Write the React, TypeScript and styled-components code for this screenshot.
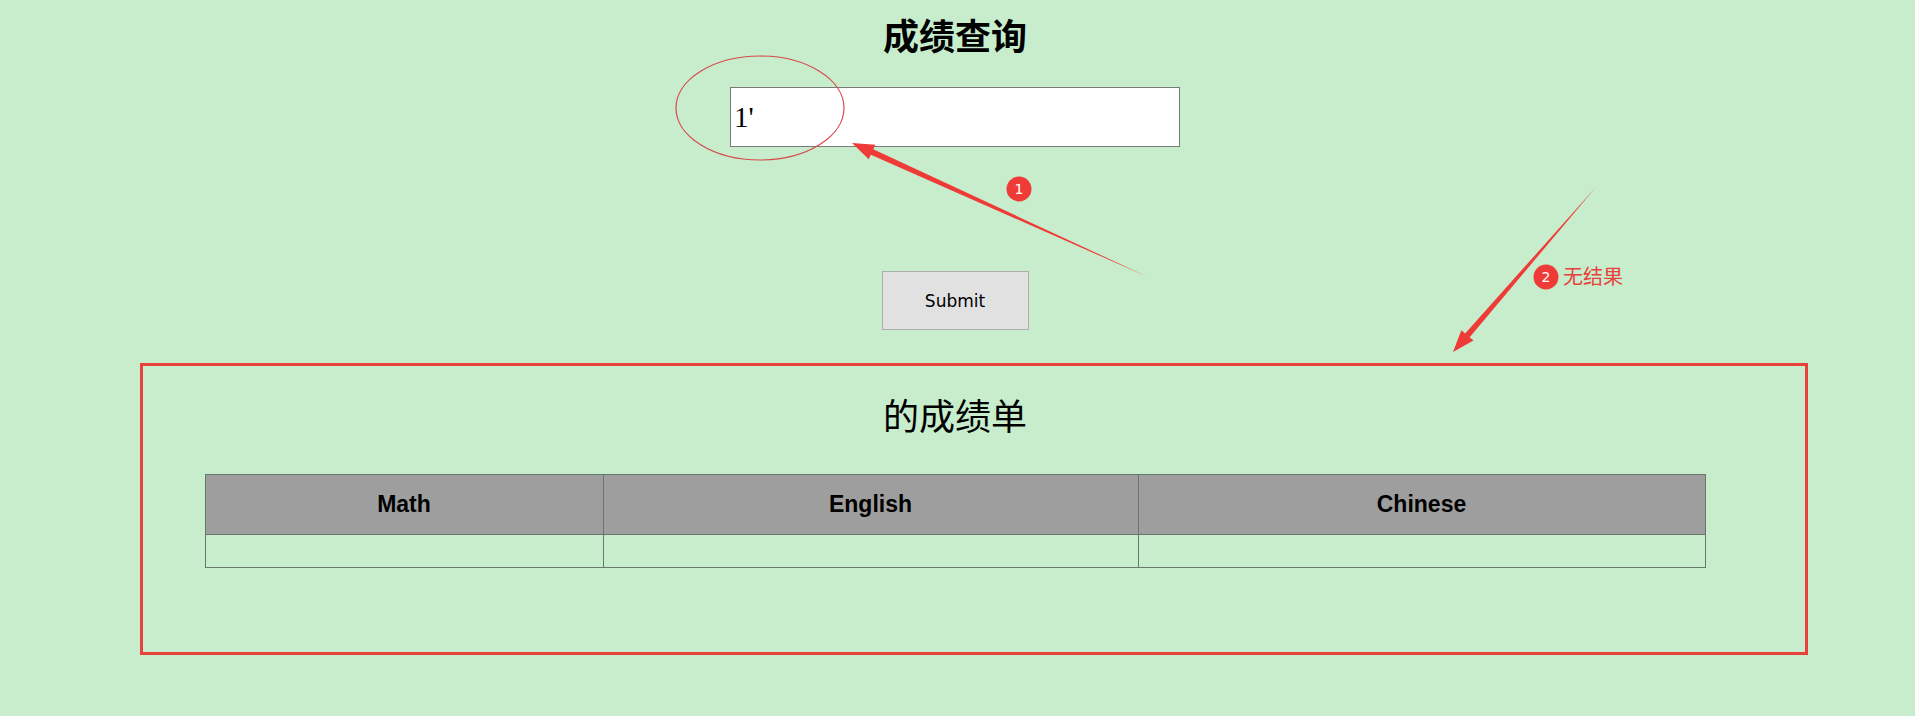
import styled, { createGlobalStyle } from "styled-components";

const GlobalStyle = createGlobalStyle`
  html, body {
    margin: 0;
    padding: 0;
    background-color: #c7edcc;
  }
`;

type Point = { x: number; y: number };

const arrowPoints = (tail: Point, tip: Point, shaft = 6, headLen = 22, headHalf = 8) => {
  const dx = tip.x - tail.x;
  const dy = tip.y - tail.y;
  const len = Math.hypot(dx, dy);
  const ux = dx / len;
  const uy = dy / len;
  const nx = -uy;
  const ny = ux;
  const bx = tip.x - ux * headLen;
  const by = tip.y - uy * headLen;
  const pts = [
    [tail.x, tail.y],
    [bx + (nx * shaft) / 2, by + (ny * shaft) / 2],
    [bx + nx * headHalf, by + ny * headHalf],
    [tip.x, tip.y],
    [bx - nx * headHalf, by - ny * headHalf],
    [bx - (nx * shaft) / 2, by - (ny * shaft) / 2],
  ];
  return pts.map((p) => p.join(",")).join(" ");
};

const Annotations = () => (
  <OverlayStyled viewBox="0 0 1915 716" width="1915" height="716">
    <ellipse cx="760" cy="108" rx="84" ry="52" fill="none" stroke="#d9474a" strokeWidth="1.2" />
    <polygon points={arrowPoints({ x: 1148, y: 277 }, { x: 852, y: 143 })} fill="#ef3b38" />
    <circle cx="1019" cy="189" r="12.5" fill="#ef3b38" />
    <text x="1019" y="194" textAnchor="middle" fontSize="14" fill="#fff" fontFamily="'DejaVu Sans', sans-serif">
      1
    </text>
    <polygon points={arrowPoints({ x: 1596, y: 187 }, { x: 1453, y: 352 })} fill="#ef3b38" />
    <circle cx="1546" cy="277" r="12.5" fill="#ef3b38" />
    <text x="1546" y="282" textAnchor="middle" fontSize="14" fill="#fff" fontFamily="'DejaVu Sans', sans-serif">
      2
    </text>
    <text x="1563" y="284" fontSize="20" fill="#e8403a" fontFamily="'Noto Sans CJK SC', sans-serif">
      无结果
    </text>
    <rect x="141.5" y="364.5" width="1665" height="289" fill="none" stroke="#e8403a" strokeWidth="3" />
  </OverlayStyled>
);

const subjects = [
  { name: "Math", width: 398 },
  { name: "English", width: 535 },
  { name: "Chinese", width: 567 },
];

const App = () => {
  return (
    <>
      <GlobalStyle />
      <PageStyled>
        <ContentStyled>
          <TitleStyled>成绩查询</TitleStyled>
          <QueryInputStyled type="text" defaultValue="1'" />
          <SubmitButtonStyled type="button">Submit</SubmitButtonStyled>
          <ResultTitleStyled>的成绩单</ResultTitleStyled>
          <ScoreTableStyled>
            <thead>
              <tr>
                {subjects.map((s) => (
                  <HeadCellStyled key={s.name} $width={s.width}>
                    {s.name}
                  </HeadCellStyled>
                ))}
              </tr>
            </thead>
            <tbody>
              <tr>
                {subjects.map((s) => (
                  <CellStyled key={s.name}></CellStyled>
                ))}
              </tr>
            </tbody>
          </ScoreTableStyled>
        </ContentStyled>
        <Annotations />
      </PageStyled>
    </>
  );
};

export default App;

const PageStyled = styled.div`
  position: relative;
  width: 100%;
  min-height: 716px;
  overflow: hidden;
  background-color: #c7edcc;
`;

const ContentStyled = styled.div`
  width: 1910px;
  display: flex;
  flex-direction: column;
  align-items: center;
`;

const TitleStyled = styled.h1`
  margin: 16px 0 0;
  font-family: "Noto Sans CJK SC", sans-serif;
  font-size: 36px;
  line-height: 36px;
  font-weight: 700;
  color: #000;
`;

const QueryInputStyled = styled.input`
  box-sizing: border-box;
  margin-top: 35px;
  width: 450px;
  height: 60px;
  padding: 0 3px;
  border: 1px solid #7a7a7a;
  background-color: #fff;
  font-family: "Liberation Serif", serif;
  font-size: 29px;
  color: #000;
  outline: none;
`;

const SubmitButtonStyled = styled.button`
  box-sizing: border-box;
  margin-top: 124px;
  width: 147px;
  height: 59px;
  background-color: #e1e1e1;
  border: 1px solid #adadad;
  font-family: "DejaVu Sans", sans-serif;
  font-size: 17px;
  color: #000;
  cursor: pointer;
`;

const ResultTitleStyled = styled.h2`
  margin: 66px 0 0;
  font-family: "Noto Sans CJK SC", sans-serif;
  font-size: 36px;
  line-height: 36px;
  font-weight: 400;
  color: #000;
`;

const ScoreTableStyled = styled.table`
  margin-top: 42px;
  width: 1500px;
  border-collapse: collapse;
  table-layout: fixed;
`;

const HeadCellStyled = styled.th<{ $width: number }>`
  width: ${({ $width }) => $width}px;
  height: 60px;
  padding: 0;
  box-sizing: border-box;
  background-color: #9e9e9e;
  border: 1px solid #66786a;
  font-family: "Liberation Sans", Arial, sans-serif;
  font-size: 23px;
  font-weight: 700;
  color: #000;
  text-align: center;
`;

const CellStyled = styled.td`
  height: 33px;
  padding: 0;
  box-sizing: border-box;
  border: 1px solid #66786a;
`;

const OverlayStyled = styled.svg`
  position: absolute;
  top: 0;
  left: 0;
  pointer-events: none;
`;
